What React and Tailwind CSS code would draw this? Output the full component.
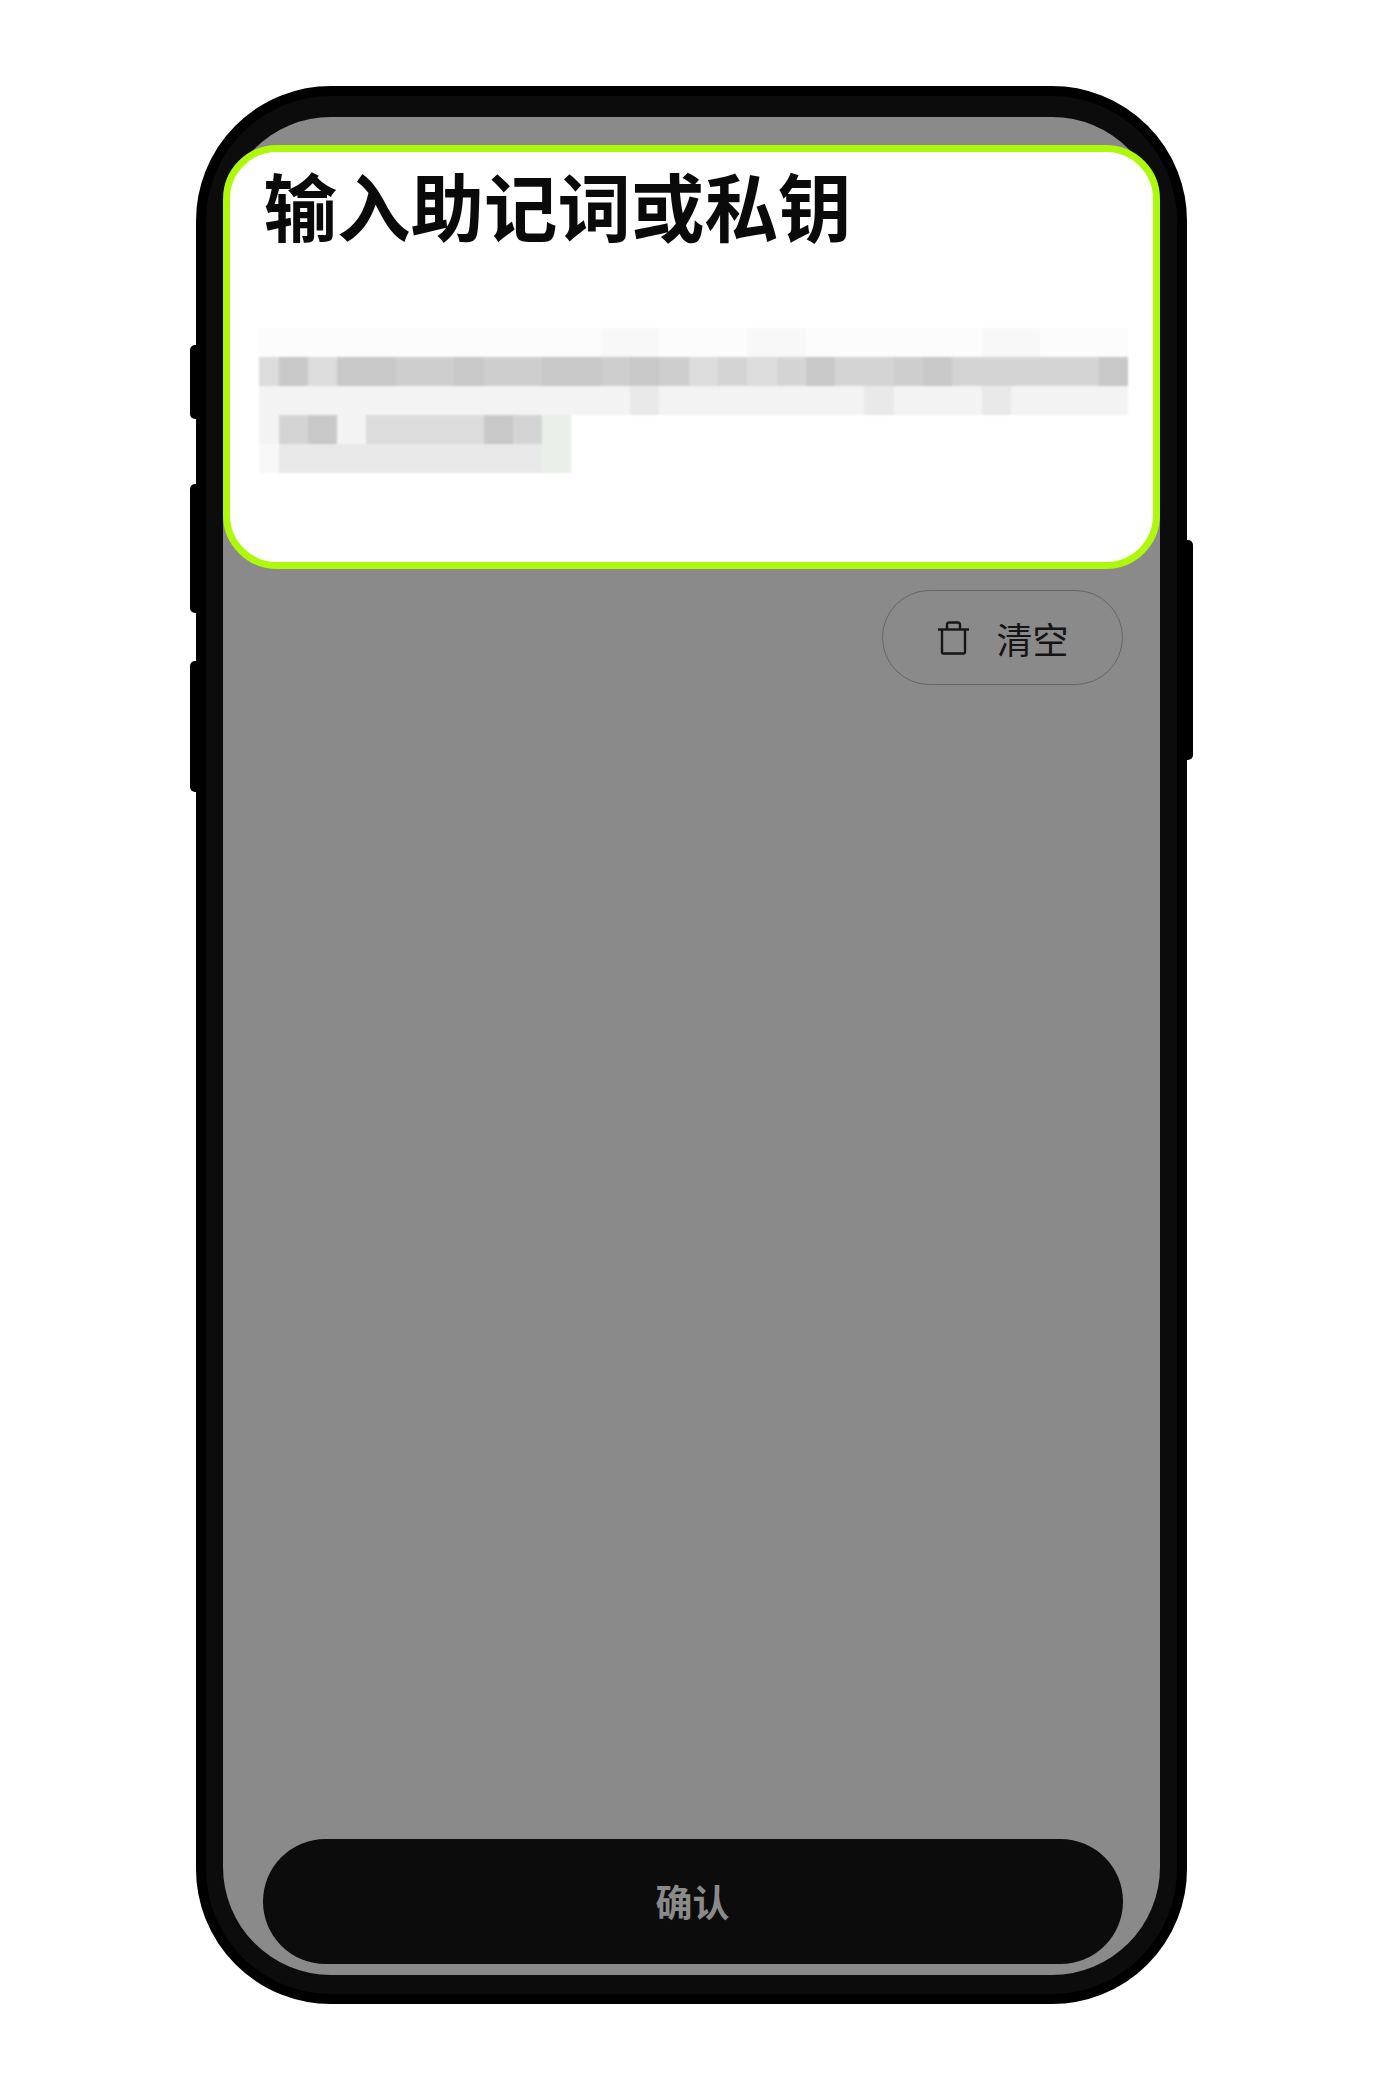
import React from "react";

const shades = {
  a: "bg-[#c8c8c8]",
  b: "bg-[#cecece]",
  c: "bg-[#d4d4d4]",
  d: "bg-[#dcdcdc]",
  e: "bg-[#e9e9e9]",
  f: "bg-[#f3f3f3]",
  g: "bg-[#f8f8f8]",
  h: "bg-[#fcfcfc]",
  G: "bg-[#e8f0e8]",
};

// pixelated secret phrase, one string per row of the mosaic
const mosaic = [
  "hhhhhhhhhhhhgghhhgghhhhhhgghhh",
  "dadaabbabbaababdcdcaccbaccccca",
  "fffffffffffffefffffffefffeffff",
  "fcafddddacG",
  "geeeeeeeeeG",
];

function TrashIcon() {
  return (
    <svg width="33" height="34" viewBox="0 0 33 34" fill="none" stroke="#161616" strokeWidth="2.4">
      <path d="M1 8.5h31" />
      <path d="M5 8.5V31a1.5 1.5 0 0 0 1.5 1.5h20A1.5 1.5 0 0 0 28 31V8.5" />
      <path d="M10 8V4a2.5 2.5 0 0 1 2.5-2.5h8A2.5 2.5 0 0 1 23 4v4" />
    </svg>
  );
}

export default function App() {
  return (
    <div className="w-full h-[2080px] bg-white flex justify-center pt-[86px] pr-[2px] font-['Noto_Sans_CJK_SC','Liberation_Sans',sans-serif]">
      <div className="relative w-[991px] h-[1918px]">
        <div className="absolute left-[-6px] top-[259px] w-[8px] h-[74px] bg-black rounded-l-[5px]" />
        <div className="absolute left-[-6px] top-[398px] w-[8px] h-[129px] bg-black rounded-l-[5px]" />
        <div className="absolute left-[-6px] top-[575px] w-[8px] h-[131px] bg-black rounded-l-[5px]" />
        <div className="absolute right-[-6px] top-[454px] w-[8px] h-[220px] bg-black rounded-r-[5px]" />

        <div className="relative w-full h-full flex rounded-[135px] border-[10px] border-black bg-[#0c0c0c] pt-[21px] pb-[19px] px-[17px]">
          <div className="flex-1 flex flex-col rounded-[108px] bg-[#8a8a8a]">
            <div className="mt-[28px] h-[424px] rounded-[54px] border-[7px] border-[#aef80c] bg-white pl-[34px]">
              <h1 className="mt-[2px] text-[73.5px] leading-[100px] font-bold text-[#0a0a0a]">
                输入助记词或私钥
              </h1>
              <div className="mt-[74px] ml-[-5px] flex flex-col blur-[1px]">
                {mosaic.map((row, i) => (
                  <div key={i} className="flex h-[29px]">
                    {row.split("").map((c, j) => (
                      <div key={j} className={`w-[29.3px] first:w-[20px] shrink-0 ${shades[c]}`} />
                    ))}
                  </div>
                ))}
              </div>
            </div>

            <div className="mt-[21px] mr-[37px] flex justify-end">
              <button className="w-[241px] h-[95px] rounded-full border border-[#666666] flex items-center justify-center gap-[26px] pl-[2px] text-[36px] text-[#141414]">
                <TrashIcon />
                <span>清空</span>
              </button>
            </div>

            <button className="mt-auto mb-[11px] ml-[40px] mr-[37px] h-[125px] rounded-full bg-[#0c0c0c] text-[37px] font-bold text-[#8a8a8a]">
              确认
            </button>
          </div>
        </div>
      </div>
    </div>
  );
}
